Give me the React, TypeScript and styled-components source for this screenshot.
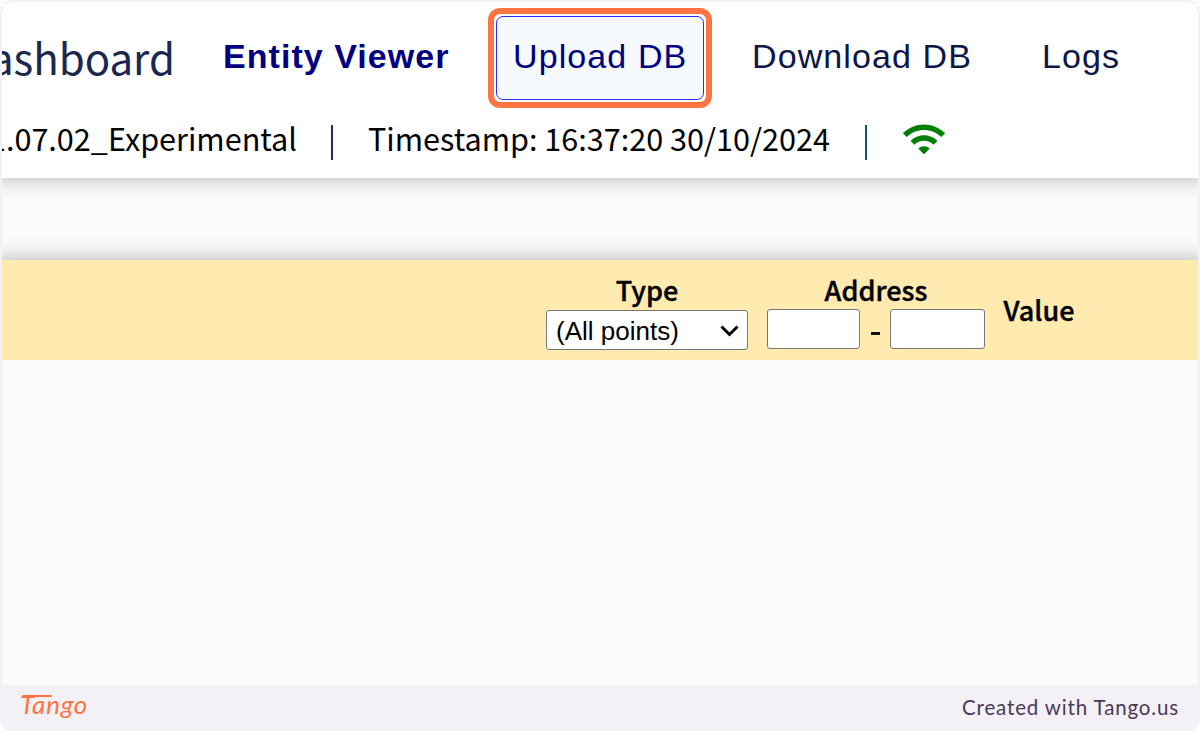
import React from "react";
import styled, { createGlobalStyle } from "styled-components";
import { MdWifi } from "react-icons/md";

const Global = createGlobalStyle`
  * { box-sizing: border-box; }
  body { margin: 0; background: #fff; }
`;

const sourceSans = `"Noto Sans CJK JP", "Noto Sans", sans-serif`;
const arial = `"Liberation Sans", Arial, sans-serif`;

const Frame = styled.div`
  width: 1200px;
  height: 731px;
  display: flex;
  flex-direction: column;
  background: #f3f0f6;
  border-radius: 12px;
  padding: 2px 2px 0;
  overflow: hidden;
`;

const Screen = styled.main`
  height: 683px;
  display: flex;
  flex-direction: column;
  background: #fafbfd;
  border-radius: 9px 9px 0 0;
  overflow: hidden;
`;

const Header = styled.header`
  height: 176px;
  flex: none;
  background: #fff;
  box-shadow: 0 -9px 20px 10px rgba(0, 0, 0, 0.28);
  clip-path: inset(0 0 -30px 0);
`;

const Nav = styled.nav`
  height: 106px;
  display: flex;
  align-items: flex-start;
  padding-top: 6px;
`;

const NavItem = styled.a<{ $width: number; $gap: number; $bold?: boolean }>`
  width: ${(p) => p.$width}px;
  margin-left: ${(p) => p.$gap}px;
  flex: none;
  white-space: nowrap;
  font: ${(p) => (p.$bold ? 700 : 400)} 34px/96px ${arial};
  letter-spacing: ${(p) => (p.$bold ? 1.05 : 1.1)}px;
  color: ${(p) => (p.$bold ? "#000080" : "#0d1648")};
`;

const Brand = styled.a`
  width: 173px;
  margin-left: 0;
  flex: none;
  display: flex;
  justify-content: flex-end;
  white-space: nowrap;
  overflow: hidden;
  font: 400 42px/98px ${sourceSans};
  color: #1a2850;
`;

const Highlight = styled.div`
  width: 224px;
  height: 100px;
  margin-left: 37px;
  flex: none;
  border: 6px solid #ff7442;
  border-radius: 12px;
  padding: 2px;
`;

const ActiveItem = styled.a`
  display: flex;
  height: 84px;
  padding-left: 16px;
  border: 1px solid #2a2aff;
  border-radius: 7px;
  background: #f6faff;
  font: 400 34px/78px ${arial};
  letter-spacing: 1.1px;
  white-space: nowrap;
  color: #000080;
`;

const Status = styled.div`
  height: 60px;
  display: flex;
  align-items: center;
  font: 400 30.6px/60px ${sourceSans};
  color: #000;
`;

const StatusText = styled.span<{ $width: number; $gap?: number; $end?: boolean }>`
  width: ${(p) => p.$width}px;
  margin-left: ${(p) => p.$gap ?? 0}px;
  flex: none;
  display: flex;
  justify-content: ${(p) => (p.$end ? "flex-end" : "flex-start")};
  white-space: nowrap;
  overflow: hidden;
`;

const Divider = styled.span<{ $gap: number; $color: string }>`
  width: 2px;
  height: 35px;
  margin-left: ${(p) => p.$gap}px;
  margin-top: 8px;
  flex: none;
  background: ${(p) => p.$color};
`;

const Wifi = styled(MdWifi)`
  width: 46px;
  height: 46px;
  margin-left: 34px;
  margin-top: 1px;
  flex: none;
  color: #008000;
`;

const FilterBar = styled.section`
  height: 100px;
  margin-top: 82px;
  flex: none;
  display: flex;
  padding-left: 544px;
  background: #ffeab0;
  box-shadow: 0 9px 20px 10px rgba(0, 0, 0, 0.28);
  clip-path: inset(-30px 0 0 0);
`;

const Column = styled.div<{ $width: number; $gap?: number }>`
  width: ${(p) => p.$width}px;
  margin-left: ${(p) => p.$gap ?? 0}px;
  display: flex;
  flex-direction: column;
  flex: none;
`;

const Label = styled.span<{ $top?: number; $height?: number }>`
  height: ${(p) => p.$height ?? 49}px;
  padding-top: ${(p) => p.$top ?? 10}px;
  text-align: center;
  white-space: nowrap;
  font: 500 27px/40px ${sourceSans};
  color: #000;
  -webkit-text-stroke: 0.4px #000;
`;

const SelectBox = styled.button`
  height: 40px;
  margin-top: 1px;
  padding: 1px 8px 0 9px;
  display: flex;
  align-items: center;
  justify-content: space-between;
  border: 1px solid #767676;
  border-radius: 3px;
  background: #fff;
  font: 400 26px/38px ${arial};
  color: #000;
`;

const Range = styled.div`
  display: flex;
  align-items: center;
  height: 40px;
`;

const Field = styled.input<{ $width: number }>`
  width: ${(p) => p.$width}px;
  height: 40px;
  flex: none;
  border: 1px solid #767676;
  border-radius: 3px;
  background: #fff;
`;

const Dash = styled.span`
  width: 9px;
  height: 3px;
  margin: 9px 10px 0 11px;
  background: #111;
`;

const Footer = styled.footer`
  height: 46px;
  display: flex;
  justify-content: space-between;
  align-items: center;
  padding: 0 19px 0 18px;
  font: 400 20.5px/46px Lato, sans-serif;
  letter-spacing: 0.85px;
  color: #4a3a58;
`;

const Credit = styled.span`
  margin-top: -3px;
`;

const Logo = styled.span`
  display: flex;
  flex-direction: column;
  height: 32px;
  font: italic 400 26px/29px Lato, sans-serif;
  letter-spacing: 0.8px;
  color: #ff7442;
  &::before {
    content: "";
    width: 30px;
    height: 2px;
    margin: 3px 0 -7px 2px;
    border-radius: 1px;
    background: #ff7442;
  }
`;

export default function App() {
  return (
    <>
      <Global />
      <Frame>
        <Screen>
          <Header>
            <Nav>
              <Brand>Dashboard</Brand>
              <NavItem $width={228} $gap={48} $bold>Entity Viewer</NavItem>
              <Highlight>
                <ActiveItem>Upload DB</ActiveItem>
              </Highlight>
              <NavItem $width={220} $gap={40}>Download DB</NavItem>
              <NavItem $width={80} $gap={70}>Logs</NavItem>
            </Nav>
            <Status>
              <StatusText $width={295} $end>1.07.02_Experimental</StatusText>
              <Divider $gap={34} $color="#39206b" />
              <StatusText $width={464} $gap={35}>Timestamp: 16:37:20 30/10/2024</StatusText>
              <Divider $gap={33} $color="#185080" />
              <Wifi />
            </Status>
          </Header>
          <FilterBar>
            <Column $width={202}>
              <Label>Type</Label>
              <SelectBox>
                (All points)
                <svg width="19" height="12" viewBox="0 0 19 12" fill="none" stroke="#000" strokeWidth="3">
                  <path d="M1.5 1.5 9.5 9.5 17.5 1.5" />
                </svg>
              </SelectBox>
            </Column>
            <Column $width={218} $gap={19}>
              <Label>Address</Label>
              <Range>
                <Field $width={93} />
                <Dash />
                <Field $width={95} />
              </Range>
            </Column>
            <Column $width={74} $gap={17}>
              <Label $top={30} $height={80}>Value</Label>
            </Column>
          </FilterBar>
        </Screen>
        <Footer>
          <Logo>Tango</Logo>
          <Credit>Created with Tango.us</Credit>
        </Footer>
      </Frame>
    </>
  );
}
